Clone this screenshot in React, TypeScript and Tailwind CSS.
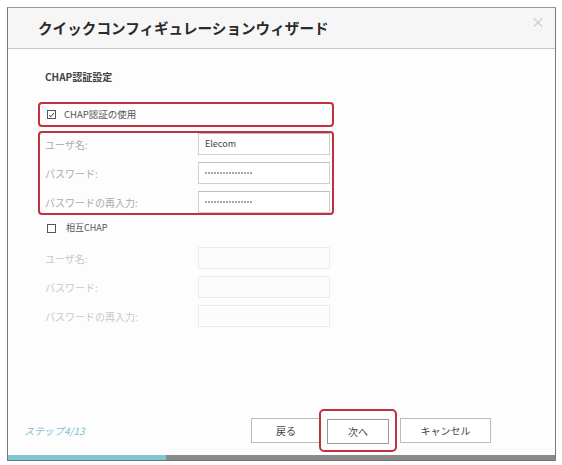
import React from "react";

const font = { fontFamily: '"Noto Sans CJK JP", "Noto Sans", sans-serif' };

interface RowProps {
  label: string;
  value?: string;
  disabled?: boolean;
}

const Dots: React.FC = () => (
  <div className="flex items-center gap-[1px]">
    {Array.from({ length: 16 }).map((_, i) => (
      <span key={i} className="w-[2px] h-[2px] rounded-full bg-[#8a8a8a]" />
    ))}
  </div>
);

const Row: React.FC<RowProps> = ({ label, value, disabled }) => (
  <div className="flex items-center h-[22px]">
    <span
      className={`w-[158px] pl-[5px] text-[10px] ${disabled ? "text-[#c8c8c8]" : "text-[#ababab]"}`}
    >
      {label}
    </span>
    <div
      className={`w-[132px] h-[22px] flex items-center px-[6px] border ${
        disabled ? "border-[#ececec] bg-[#fcfcfc]" : "border-[#cfcfcf] border-t-[#bdbdbd] bg-white"
      }`}
    >
      {value === "pw" ? <Dots /> : <span className="text-[9px] text-[#444]">{value}</span>}
    </div>
  </div>
);

const Checkbox: React.FC<{ checked?: boolean }> = ({ checked }) => (
  <span className="w-[9px] h-[9px] border border-[#555] bg-white flex items-center justify-center">
    {checked && (
      <svg viewBox="0 0 10 10" className="w-[8px] h-[8px]">
        <path d="M2 5 L4 7.5 L8.5 2" stroke="#333" strokeWidth="1.4" fill="none" />
      </svg>
    )}
  </span>
);

export default function App() {
  return (
    <div className="w-[562px] h-[465px] bg-white pt-[7px] pl-[7px] pr-[6px]" style={font}>
      <div className="h-[454px] border border-[#777] border-t-[#999] flex flex-col bg-[#fdfdfd]">
        <div className="relative h-[41px] shrink-0 bg-[#f6f6f6] border-b border-[#c8c8c8] flex items-center pl-[30px]">
          <h1 className="text-[14.6px] font-bold text-[#2a2a2a]">
            クイックコンフィギュレーションウィザード
          </h1>
          <span className="absolute right-[10px] top-[3px] text-[14px] text-[#c8c8c8]">×</span>
        </div>

        <div className="flex flex-col pl-[30px] pt-[20px]">
          <p className="pl-[7px] text-[10px] font-bold text-[#444]">CHAP認証設定</p>

          <div className="mt-[18px] w-[296px] h-[25px] border-2 border-[#c22f3d] rounded-[4px] flex items-center gap-[8px] pl-[7px]">
            <Checkbox checked />
            <span className="text-[9.5px] text-[#555]">CHAP認証の使用</span>
          </div>

          <div className="mt-[4px] w-[296px] border-2 border-[#c22f3d] rounded-[4px] flex flex-col gap-[7px]">
            <Row label="ユーザ名:" value="Elecom" />
            <Row label="パスワード:" value="pw" />
            <Row label="パスワードの再入力:" value="pw" />
          </div>

          <div className="mt-[5px] flex items-center gap-[10px] pl-[9px] h-[16px]">
            <Checkbox />
            <span className="text-[9px] text-[#555]">相互CHAP</span>
          </div>

          <div className="mt-[11px] pl-[2px] flex flex-col gap-[7px]">
            <Row label="ユーザ名:" disabled />
            <Row label="パスワード:" disabled />
            <Row label="パスワードの再入力:" disabled />
          </div>
        </div>

        <div className="mt-auto flex items-center pl-[16px] pr-[64px] h-[50px]">
          <span className="text-[10px] italic text-[#7cc0d4]">ステップ4/13</span>
          <div className="ml-auto flex items-center">
            <button className="w-[70px] h-[25px] border border-[#bbb] bg-white text-[10px] text-[#444]">
              戻る
            </button>
            <div className="relative ml-[-2px] p-[6px] border-2 border-[#c22f3d] rounded-[5px] -my-[12px]">
              <button className="w-[62px] h-[25px] border border-[#999] bg-white text-[10px] text-[#444]">
                次へ
              </button>
            </div>
            <button className="ml-[3px] w-[91px] h-[25px] border border-[#bbb] bg-white text-[10px] text-[#444]">
              キャンセル
            </button>
          </div>
        </div>

        <div className="h-[5px] flex shrink-0">
          <div className="w-[158px] bg-[#7fc7d6]" />
          <div className="flex-1 bg-[#8a8a8a]" />
        </div>
      </div>
    </div>
  );
}
